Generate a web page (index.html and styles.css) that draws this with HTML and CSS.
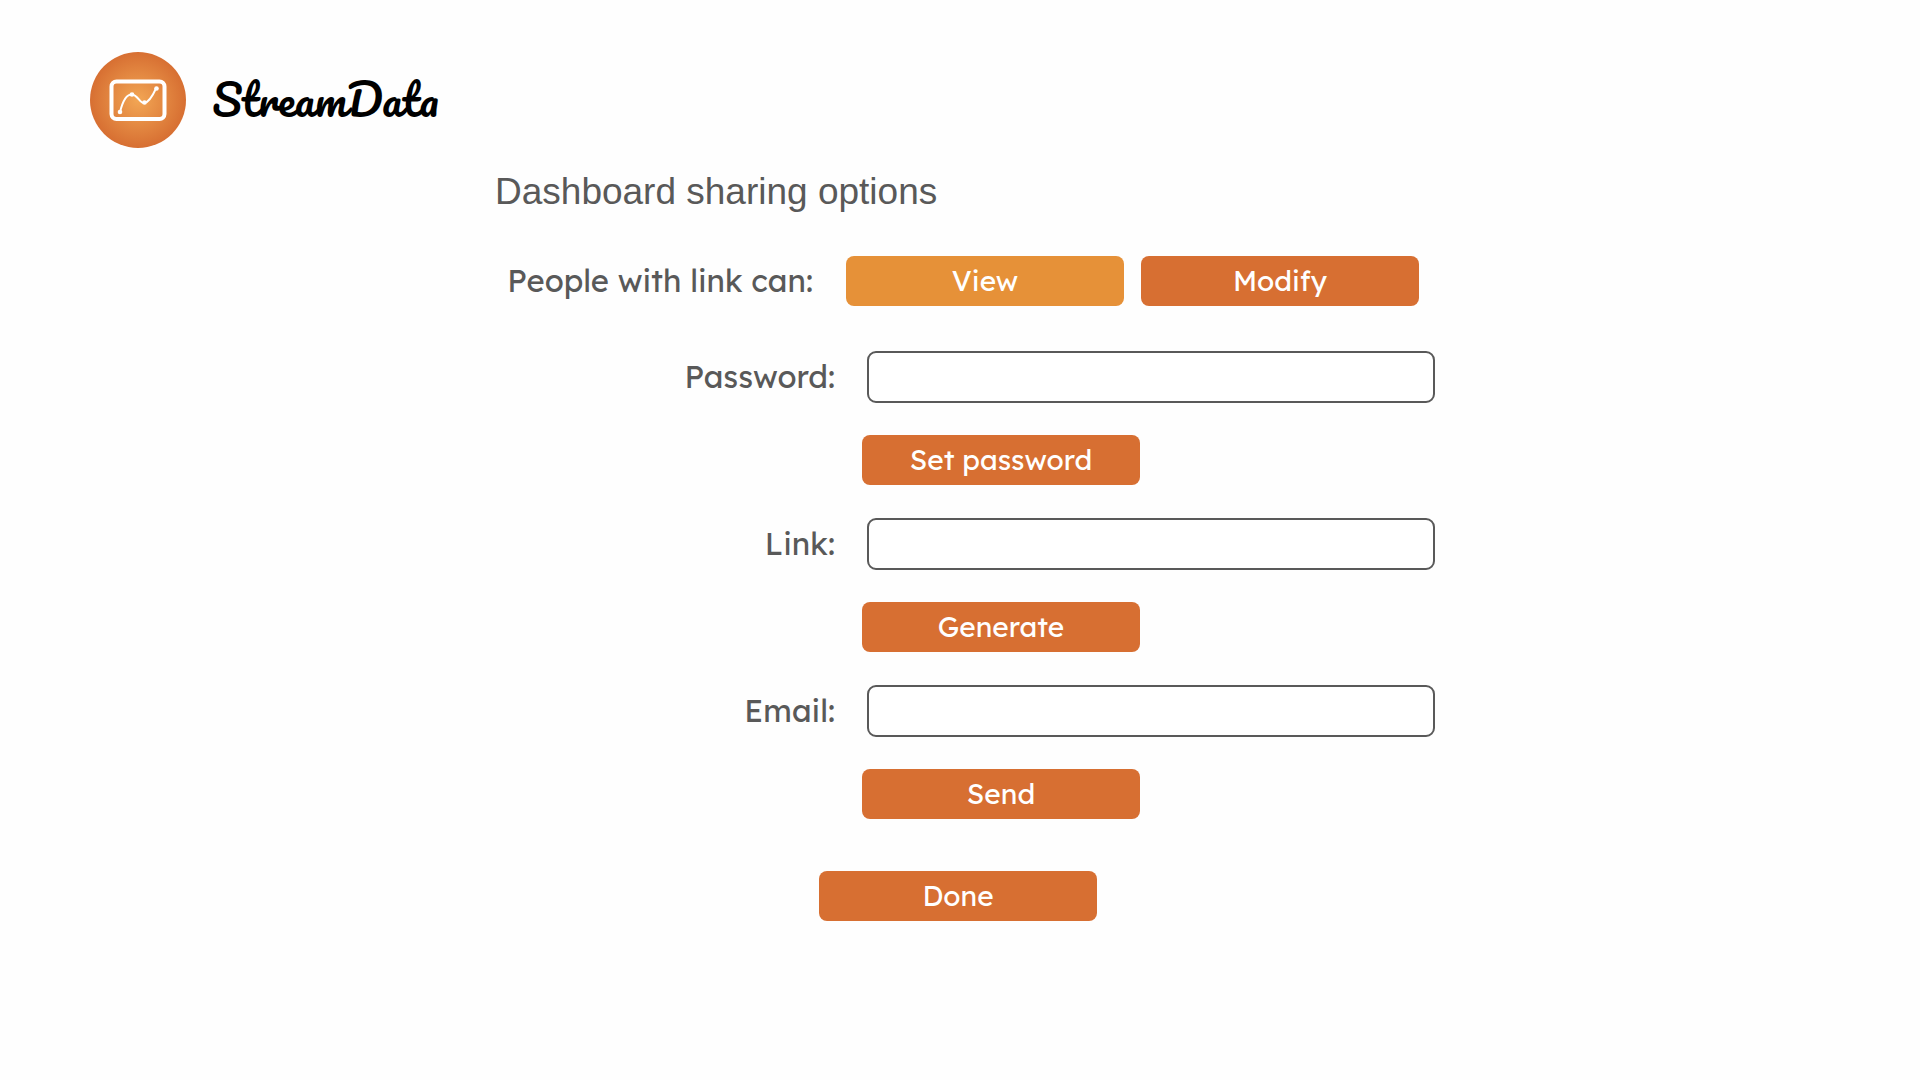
FILE: index.html
```html
<!DOCTYPE html>
<html lang="en">
<head>
<meta charset="utf-8">
<title>StreamData</title>
<link rel="stylesheet" href="styles.css">
</head>
<body>
<header class="header">
  <svg class="logo" viewBox="0 0 96 96" aria-hidden="true">
    <defs>
      <radialGradient id="glow">
        <stop offset="0" stop-color="#f2a654"/>
        <stop offset="1" stop-color="#d76f32"/>
      </radialGradient>
    </defs>
    <circle cx="48" cy="48" r="48" fill="url(#glow)"/>
    <g fill="none" stroke="#fff">
      <rect x="21.5" y="29.500" width="53" height="37.500" rx="5" stroke-width="4"/>
      <path d="M30 60C32 52 36 42 42 42.500S50 52 54.500 51 63 43 66 36.500" stroke-width="2"/>
    </g>
    <g fill="#fff">
      <circle cx="30" cy="60" r="2.300"/>
      <circle cx="42" cy="42.500" r="2.300"/>
      <circle cx="54.500" cy="50.500" r="2.300"/>
      <circle cx="66.500" cy="36.500" r="2.300"/>
    </g>
  </svg>
  <span class="brand">StreamData</span>
</header>
<main class="sharing">
  <h1 class="title">Dashboard sharing options</h1>
  <form class="form">
    <div class="access" role="group" aria-labelledby="access-label">
      <span class="label" id="access-label">People with link can:</span>
      <button class="button button-active" type="button">View</button>
      <button class="button" type="button">Modify</button>
    </div>
    <div class="field">
      <label class="label" for="password">Password:</label>
      <input class="input" id="password" type="password">
      <button class="button field-button" type="button">Set password</button>
    </div>
    <div class="field">
      <label class="label" for="link">Link:</label>
      <input class="input" id="link" type="text">
      <button class="button field-button" type="button">Generate</button>
    </div>
    <div class="field">
      <label class="label" for="email">Email:</label>
      <input class="input" id="email" type="email">
      <button class="button field-button" type="button">Send</button>
    </div>
    <button class="button done" type="submit">Done</button>
  </form>
</main>
</body>
</html>
```
FILE: styles.css
```css
* {
  box-sizing: border-box;
}

body {
  margin: 0;
  background: #fefefe;
  color: #595959;
  font-family: "Lexend Deca", Inter, sans-serif;
}

.header {
  display: flex;
  align-items: center;
  gap: 26px;
  padding: 52px 90px 0;
}

.logo {
  width: 96px;
  height: 96px;
}

.brand {
  color: #000;
  font: 400 43px/48px Pacifico, Lato, sans-serif;
  padding-bottom: 2px;
}

.sharing {
  max-width: 958px;
  margin: 21px auto 0;
  padding-right: 4px;
}

.title {
  margin: 0 0 41px;
  padding-left: 14px;
  font: 400 37px/46px "Liberation Sans", Arial, sans-serif;
}

.form {
  display: flex;
  flex-direction: column;
  gap: 33px;
}

.access {
  display: grid;
  grid-template-columns: 1fr 278px 278px;
  align-items: center;
  column-gap: 17px;
  padding-right: 16px;
  margin-bottom: 12px;
}

.access .label {
  padding-right: 16px;
}

.field {
  display: grid;
  grid-template-columns: 354px 1fr;
  align-items: center;
  gap: 32px;
}

.label {
  font-size: 31px;
  line-height: 40px;
  text-align: right;
}

.input {
  width: 100%;
  height: 52px;
  padding: 0 16px;
  border: 2px solid #595959;
  border-radius: 9px;
  background: #fff;
  color: inherit;
  font: inherit;
  font-size: 28px;
}

.button {
  width: 278px;
  height: 50px;
  padding: 0;
  border: 0;
  border-radius: 8px;
  background: #d76f32;
  color: #fff;
  font: inherit;
  font-size: 28px;
  line-height: 40px;
}

.button-active {
  background: #e69138;
}

.field-button {
  grid-column: 2;
  margin-left: -5px;
}

.done {
  align-self: center;
  margin-top: 19px;
}
```
